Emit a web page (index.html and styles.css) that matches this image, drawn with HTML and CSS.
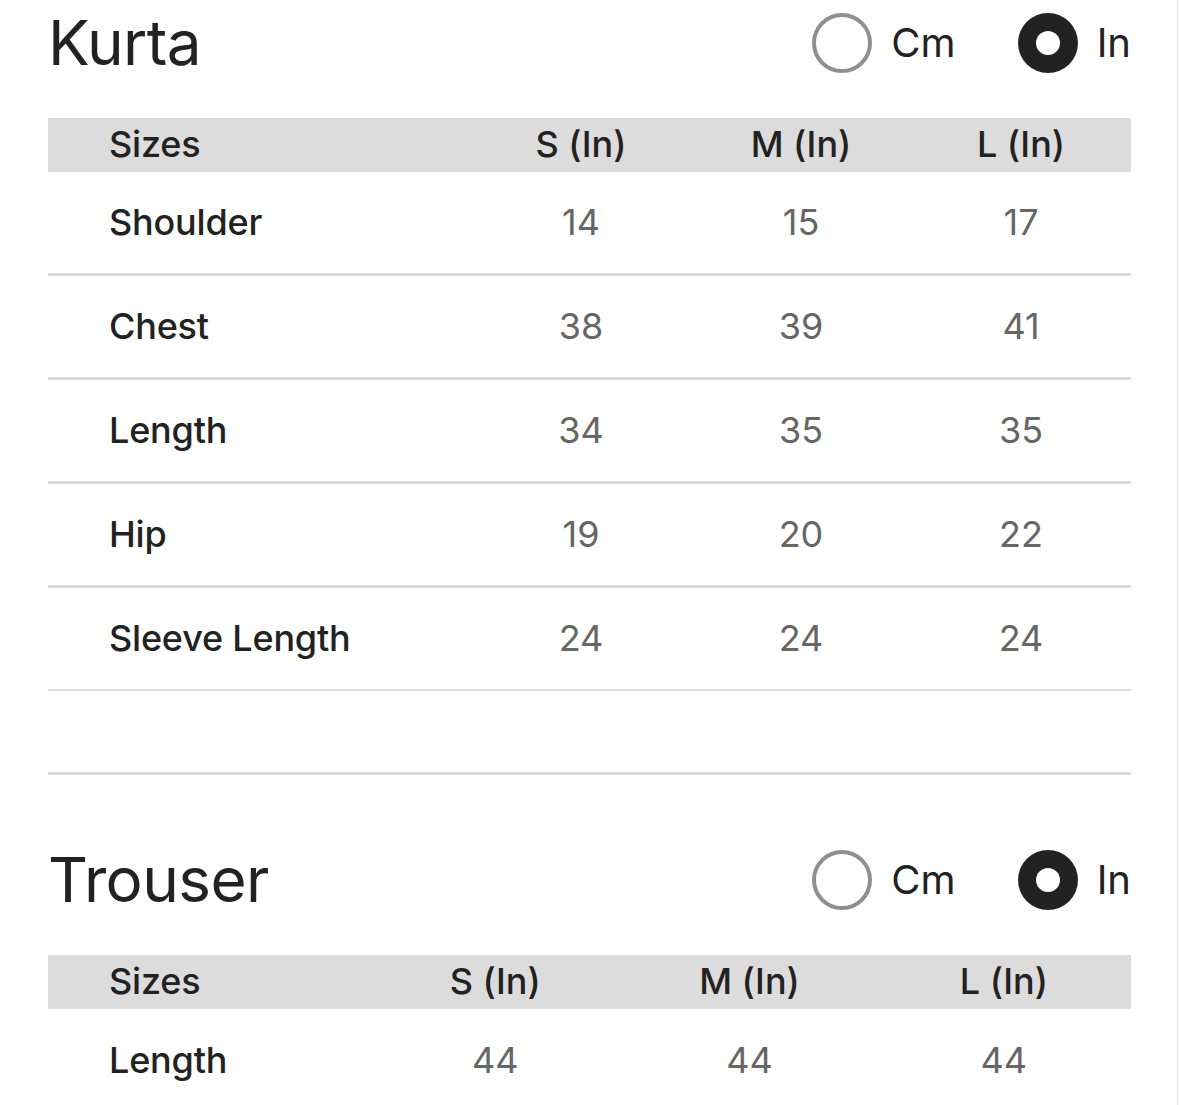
FILE: index.html
```html
<!DOCTYPE html>
<html lang="en">
<head>
<meta charset="utf-8">
<title>Size Chart</title>
<link rel="stylesheet" href="styles.css">
</head>
<body>
<div class="page">
  <section class="chart">
    <div class="chart-head">
      <h2 class="chart-title">Kurta</h2>
      <div class="units">
        <label class="unit"><span class="radio"></span><span class="unit-label">Cm</span></label>
        <label class="unit"><span class="radio checked"></span><span class="unit-label">In</span></label>
      </div>
    </div>
    <div class="table kurta">
      <div class="row head"><div class="cell name">Sizes</div><div class="cell">S (In)</div><div class="cell">M (In)</div><div class="cell">L (In)</div></div>
      <div class="row"><div class="cell name">Shoulder</div><div class="cell num">14</div><div class="cell num">15</div><div class="cell num">17</div></div>
      <div class="row"><div class="cell name">Chest</div><div class="cell num">38</div><div class="cell num">39</div><div class="cell num">41</div></div>
      <div class="row"><div class="cell name">Length</div><div class="cell num">34</div><div class="cell num">35</div><div class="cell num">35</div></div>
      <div class="row"><div class="cell name">Hip</div><div class="cell num">19</div><div class="cell num">20</div><div class="cell num">22</div></div>
      <div class="row last"><div class="cell name">Sleeve Length</div><div class="cell num">24</div><div class="cell num">24</div><div class="cell num">24</div></div>
      <div class="row spacer"></div>
    </div>
  </section>
  <section class="chart">
    <div class="chart-head">
      <h2 class="chart-title">Trouser</h2>
      <div class="units">
        <label class="unit"><span class="radio"></span><span class="unit-label">Cm</span></label>
        <label class="unit"><span class="radio checked"></span><span class="unit-label">In</span></label>
      </div>
    </div>
    <div class="table trouser">
      <div class="row head"><div class="cell name">Sizes</div><div class="cell">S (In)</div><div class="cell">M (In)</div><div class="cell">L (In)</div></div>
      <div class="row"><div class="cell name">Length</div><div class="cell num">44</div><div class="cell num">44</div><div class="cell num">44</div></div>
    </div>
  </section>
</div>
</body>
</html>
```
FILE: styles.css
```css
* { box-sizing: border-box; }
html, body { margin: 0; padding: 0; background: #fff; }
body {
  font-family: Inter, "Noto Sans", sans-serif;
  color: #222;
}
.page {
  width: 1178px;
  min-height: 1105px;
  padding: 0 46px 0 48px;
  border-right: 1px solid #e2e2e2;
  display: flex;
  flex-direction: column;
  gap: 62px;
}
.chart-head {
  height: 86px;
  display: flex;
  align-items: center;
  justify-content: space-between;
  margin-bottom: 32px;
}
.chart-title {
  margin: 0;
  font-size: 62px;
  font-weight: 400;
  line-height: 86px;
  letter-spacing: -0.6px;
}
.units {
  display: flex;
  align-items: center;
  gap: 62px;
}
.unit {
  display: flex;
  align-items: center;
  gap: 19px;
}
.radio {
  width: 60px;
  height: 60px;
  border-radius: 50%;
  border: 4px solid #8e8e93;
  display: flex;
  align-items: center;
  justify-content: center;
}
.radio.checked {
  border: 0;
  background: #222;
}
.radio.checked::after {
  content: "";
  width: 24px;
  height: 24px;
  border-radius: 50%;
  background: #fff;
}
.unit-label {
  font-size: 40px;
  line-height: 1;
}
.table { width: 1083px; }
.row {
  display: grid;
  align-items: center;
  height: 104px;
  padding-bottom: 2px;
  border-bottom: 3px solid #dddddd;
}
.kurta .row { grid-template-columns: 423px repeat(3, 1fr); }
.trouser .row { grid-template-columns: 320px repeat(3, 1fr); }
.row.head {
  height: 54px;
  background: #dcdcdc;
  border-bottom: 0;
}
.row.last { height: 103px; border-bottom-width: 2px; }
.row.spacer { height: 84px; }
.cell {
  text-align: center;
  font-size: 36px;
  font-weight: 500;
  line-height: 1;
}
.cell.name {
  text-align: left;
  padding-left: 61px;
  letter-spacing: -0.2px;
}
.cell.num {
  font-weight: 400;
  color: #666;
}
.trouser .row:last-child { border-bottom: 0; }
```
